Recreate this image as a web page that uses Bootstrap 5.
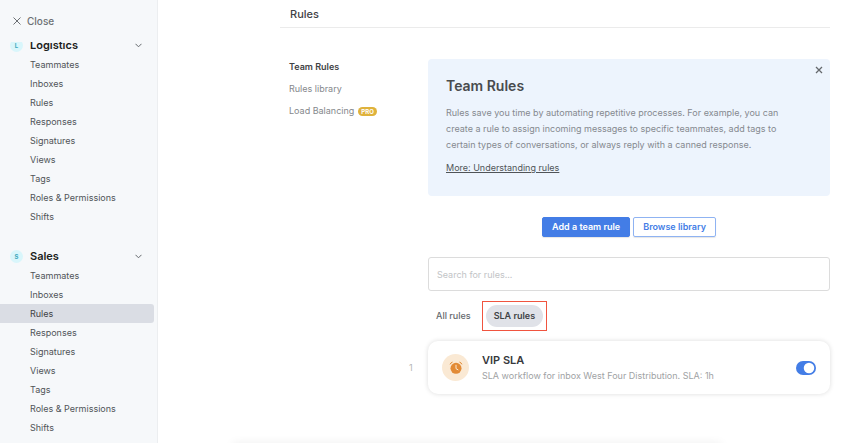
<!DOCTYPE html>
<html lang="en">
<head>
<meta charset="utf-8">
<meta name="viewport" content="width=device-width, initial-scale=1">
<title>Rules</title>
<link href="https://cdn.jsdelivr.net/npm/bootstrap@5.3.0/dist/css/bootstrap.min.css" rel="stylesheet">
<style>
  body { font-family: Inter, "Liberation Sans", sans-serif; font-size: 9px; line-height: 16px; color: #3f4245; background: #fff; }
  a { color: inherit; text-decoration: none; }
  svg { display: block; flex: none; }
  .sidebar { width: 158px; background: #f6f8fa; border-right: 1px solid #eceef0; }
  .close-link { height: 42px; padding-left: 13px; gap: 6px; color: #6c7074; font-size: 10px; font-weight: 500; }
  .side-scroll { overflow: hidden; }
  .side-inner { margin-top: -7px; }
  .group { margin-bottom: 20px; }
  .group-head { height: 20px; width: 100%; padding: 0 15px 0 10px; border: 0; background: none; font-size: 11px; font-weight: 600; color: #1c1e21; }
  .initial { width: 13px; height: 13px; margin-right: 7px; border-radius: 50%; background: #d9f6fb; color: #3fa9bd; font-size: 6px; font-weight: 700; line-height: 13px; }
  .side-link { height: 19px; line-height: 19px; margin-right: 3px; padding-left: 30px; border-radius: 0 3px 3px 0; color: #505458; }
  .side-link.current { background: #dadde4; color: #3f4245; }
  .main-area { padding: 0 30px 0 122px; }
  .page-head { height: 28px; line-height: 28px; padding-left: 10px; border-bottom: 1px solid #ebebeb; font-size: 11px; font-weight: 500; margin: 0; }
  .page-body { padding-top: 31px; }
  .sub-nav { width: 148px; padding-left: 9px; gap: 6px; color: #85888c; }
  .sub-nav .current { color: #3f4245; font-weight: 600; }
  .pro { padding: 0 3px; border-radius: 5px; background: #dfb23c; color: #fff; font-size: 6px; font-weight: 700; line-height: 9px; }
  .intro { padding: 18px; background: #edf4fd; border-radius: 4px; min-height: 137px; }
  .intro h2 { font-size: 14px; line-height: 18px; font-weight: 600; margin: 0 0 10px; color: #484b4e; }
  .intro p { color: #85898f; margin-bottom: 7px; max-width: 345px; }
  .intro a { color: #505458; text-decoration: underline; }
  .dismiss { top: 7px; right: 7px; padding: 0; border: 0; background: none; color: #65696d; }
  .actions { gap: 3px; padding-top: 21px; margin-bottom: 20px; }
  .actions .btn { --bs-btn-font-size: 9px; --bs-btn-font-weight: 600; --bs-btn-line-height: 18px; --bs-btn-padding-y: 0; --bs-btn-padding-x: 9px; --bs-btn-border-radius: 2px; box-shadow: 0 1px 1px #0000001a; }
  .actions .btn-primary { --bs-btn-bg: #437de6; --bs-btn-border-color: #437de6; }
  .actions .btn-outline-primary { --bs-btn-color: #437de6; --bs-btn-border-color: #8fb3f2; }
  .search { height: 34px; padding: 0 8px; border: 1px solid #dcdcdc; border-radius: 3px; font-size: 9px; }
  .search::placeholder { color: #c2c4c6; }
  .filters { padding: 10px 0 10px 8px; gap: 11px; }
  .filter { padding: 0; border: 0; background: none; color: #65696d; font-weight: 500; }
  .highlight { border: 1px solid #f0543f; padding: 3px; }
  .highlight .filter { padding: 0 8px; line-height: 22px; border-radius: 11px; background: #e0e2e8; color: #3f4245; font-weight: 600; }
  .rule-row { margin-left: -19px; }
  .rule-no { width: 19px; color: #b5b5b5; }
  .rule { min-height: 53px; padding: 0 14px; border-radius: 10px; background: #fff; box-shadow: 0 0 5px #00000024; }
  .clock { width: 27px; height: 27px; margin-right: 13px; border-radius: 50%; background: #fae9d4; }
  .rule h3 { font-size: 11px; line-height: 16px; font-weight: 600; margin: 0; color: #37393c; }
  .rule p { margin: 0; line-height: 15px; color: #a0a2a4; }
  .rule .form-switch { min-height: 0; padding: 0; margin: 0; }
  .rule .form-check-input { float: none; display: block; width: 20px; height: 14px; margin: 0; border: 0; background-color: #437de6; }
  .bottom-shade { left: 27%; right: 16%; bottom: -8px; height: 8px; border-radius: 8px; box-shadow: 0 0 10px #00000012; }
</style>
<script src="https://cdn.jsdelivr.net/npm/bootstrap@5.3.0/dist/js/bootstrap.bundle.min.js"></script>
</head>
<body>
<div class="d-flex vh-100 overflow-hidden position-relative">
  <aside class="sidebar d-flex flex-column flex-shrink-0">
    <a href="#" class="close-link d-flex align-items-center flex-shrink-0">
      <svg width="8" height="8" viewBox="0 0 8 8" fill="none" stroke="currentColor" aria-hidden="true"><path d="M.5 .5l7 7M7.5 .5l-7 7"/></svg>
      Close
    </a>
    <div class="side-scroll flex-fill">
      <div class="side-inner">
        <section class="group">
          <button type="button" class="group-head d-flex align-items-center">
            <span class="initial text-center">L</span>Logistics
            <svg class="ms-auto" width="7" height="5" viewBox="0 0 7 5" fill="none" stroke="#65696d" aria-hidden="true"><path d="M.5 .8l3 3 3-3"/></svg>
          </button>
          <nav class="d-flex flex-column" aria-label="Logistics">
            <a href="#" class="side-link">Teammates</a>
            <a href="#" class="side-link">Inboxes</a>
            <a href="#" class="side-link">Rules</a>
            <a href="#" class="side-link">Responses</a>
            <a href="#" class="side-link">Signatures</a>
            <a href="#" class="side-link">Views</a>
            <a href="#" class="side-link">Tags</a>
            <a href="#" class="side-link">Roles &amp; Permissions</a>
            <a href="#" class="side-link">Shifts</a>
          </nav>
        </section>
        <section class="group">
          <button type="button" class="group-head d-flex align-items-center">
            <span class="initial text-center">S</span>Sales
            <svg class="ms-auto" width="7" height="5" viewBox="0 0 7 5" fill="none" stroke="#65696d" aria-hidden="true"><path d="M.5 .8l3 3 3-3"/></svg>
          </button>
          <nav class="d-flex flex-column" aria-label="Sales">
            <a href="#" class="side-link">Teammates</a>
            <a href="#" class="side-link">Inboxes</a>
            <a href="#" class="side-link current" aria-current="page">Rules</a>
            <a href="#" class="side-link">Responses</a>
            <a href="#" class="side-link">Signatures</a>
            <a href="#" class="side-link">Views</a>
            <a href="#" class="side-link">Tags</a>
            <a href="#" class="side-link">Roles &amp; Permissions</a>
            <a href="#" class="side-link">Shifts</a>
          </nav>
        </section>
      </div>
    </div>
  </aside>

  <main class="main-area flex-fill">
    <h1 class="page-head">Rules</h1>
    <div class="page-body d-flex">
      <nav class="sub-nav d-flex flex-column flex-shrink-0" aria-label="Rules sections">
        <a href="#" class="current" aria-current="page">Team Rules</a>
        <a href="#">Rules library</a>
        <a href="#" class="d-flex align-items-center gap-1">Load Balancing <span class="pro">PRO</span></a>
      </nav>
      <div class="flex-fill">
        <section class="intro position-relative">
          <button type="button" class="dismiss position-absolute" aria-label="Dismiss">
            <svg width="8" height="8" viewBox="0 0 8 8" fill="none" stroke="currentColor" stroke-width="1.3" aria-hidden="true"><path d="M1 1l6 6M7 1l-6 6"/></svg>
          </button>
          <h2>Team Rules</h2>
          <p>Rules save you time by automating repetitive processes. For example, you can create a rule to assign incoming messages to specific teammates, add tags to certain types of conversations, or always reply with a canned response.</p>
          <a href="#">More: Understanding rules</a>
        </section>
        <div class="actions d-flex justify-content-center">
          <button type="button" class="btn btn-primary">Add a team rule</button>
          <button type="button" class="btn btn-outline-primary">Browse library</button>
        </div>
        <input type="search" class="search form-control" placeholder="Search for rules..." aria-label="Search for rules">
        <div class="filters d-flex align-items-center">
          <button type="button" class="filter">All rules</button>
          <div class="highlight d-flex"><button type="button" class="filter">SLA rules</button></div>
        </div>
        <div class="rule-row d-flex align-items-center">
          <span class="rule-no">1</span>
          <article class="rule d-flex align-items-center flex-fill">
            <span class="clock d-flex align-items-center justify-content-center">
              <svg width="14" height="14" viewBox="0 0 14 14" fill="none" aria-hidden="true">
                <circle cx="7" cy="7.3" r="5.5" fill="#e28a35"/>
                <path d="M1.2 3q.4-1.3 2-1.8M12.8 3q-.4-1.3-2-1.8" stroke="#e28a35" stroke-linecap="round"/>
                <path d="M7 4.2v3.4l2 1.2" stroke="#fae9d4" stroke-linecap="round"/>
              </svg>
            </span>
            <div class="flex-fill">
              <h3>VIP SLA</h3>
              <p>SLA workflow for inbox West Four Distribution. SLA: 1h</p>
            </div>
            <div class="form-check form-switch">
              <input class="form-check-input" type="checkbox" role="switch" aria-label="VIP SLA enabled" checked>
            </div>
          </article>
        </div>
      </div>
    </div>
  </main>
  <div class="bottom-shade position-absolute"></div>
</div>
</body>
</html>
